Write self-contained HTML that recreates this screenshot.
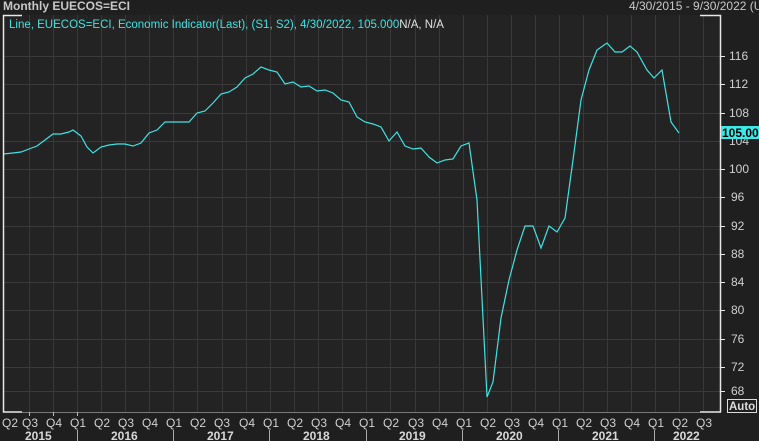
<!DOCTYPE html>
<html><head><meta charset="utf-8"><style>
html,body{margin:0;padding:0;background:#1f1f1f;width:759px;height:441px;overflow:hidden}
svg{display:block}
text{font-family:"Liberation Sans",sans-serif}
</style></head><body>
<svg width="759" height="441" viewBox="0 0 759 441" xmlns="http://www.w3.org/2000/svg">
<rect width="759" height="441" fill="#1f1f1f"/>
<rect x="3" y="15" width="717" height="397" fill="#232323"/>
<g stroke="#3a3a3a" stroke-width="1">
<line x1="3" x2="720" y1="56.5" y2="56.5"/><line x1="3" x2="720" y1="84.5" y2="84.5"/>
<line x1="3" x2="720" y1="113.5" y2="113.5"/><line x1="3" x2="720" y1="141.5" y2="141.5"/>
<line x1="3" x2="720" y1="169.5" y2="169.5"/><line x1="3" x2="720" y1="197.5" y2="197.5"/>
<line x1="3" x2="720" y1="226.5" y2="226.5"/><line x1="3" x2="720" y1="254.5" y2="254.5"/>
<line x1="3" x2="720" y1="282.5" y2="282.5"/><line x1="3" x2="720" y1="310.5" y2="310.5"/>
<line x1="3" x2="720" y1="339.5" y2="339.5"/><line x1="3" x2="720" y1="367.5" y2="367.5"/>
<line x1="3" x2="720" y1="391.5" y2="391.5"/>
</g>
<g stroke="#383838" stroke-width="1">
<line x1="29.5" x2="29.5" y1="15" y2="412"/><line x1="53.5" x2="53.5" y1="15" y2="412"/>
<line x1="77.5" x2="77.5" y1="15" y2="412"/><line x1="101.5" x2="101.5" y1="15" y2="412"/>
<line x1="125.5" x2="125.5" y1="15" y2="412"/><line x1="149.5" x2="149.5" y1="15" y2="412"/>
<line x1="173.5" x2="173.5" y1="15" y2="412"/><line x1="197.5" x2="197.5" y1="15" y2="412"/>
<line x1="222.5" x2="222.5" y1="15" y2="412"/><line x1="246.5" x2="246.5" y1="15" y2="412"/>
<line x1="270.5" x2="270.5" y1="15" y2="412"/><line x1="294.5" x2="294.5" y1="15" y2="412"/>
<line x1="318.5" x2="318.5" y1="15" y2="412"/><line x1="342.5" x2="342.5" y1="15" y2="412"/>
<line x1="366.5" x2="366.5" y1="15" y2="412"/><line x1="390.5" x2="390.5" y1="15" y2="412"/>
<line x1="415.5" x2="415.5" y1="15" y2="412"/><line x1="439.5" x2="439.5" y1="15" y2="412"/>
<line x1="463.5" x2="463.5" y1="15" y2="412"/><line x1="487.5" x2="487.5" y1="15" y2="412"/>
<line x1="511.5" x2="511.5" y1="15" y2="412"/><line x1="535.5" x2="535.5" y1="15" y2="412"/>
<line x1="559.5" x2="559.5" y1="15" y2="412"/><line x1="583.5" x2="583.5" y1="15" y2="412"/>
<line x1="607.5" x2="607.5" y1="15" y2="412"/><line x1="631.5" x2="631.5" y1="15" y2="412"/>
<line x1="655.5" x2="655.5" y1="15" y2="412"/><line x1="679.5" x2="679.5" y1="15" y2="412"/>
<line x1="703.5" x2="703.5" y1="15" y2="412"/>
</g>
<polyline fill="none" stroke="#3fe3e3" stroke-width="1.2" points="3,154 13,153 21,152 29,149 37,146 45,140 53,134 61,134 69,132 73,130 81,136 87,147 93,153 101,147 109,145 117,144 125,144 133,146 141,143 149,133 157,130 165,122 173,122 181,122 189,122 197,113 205,111 213,103 221,94 229,92 237,87 245,78 253,74 261,67 269,70 277,72 285,84 293,82 301,87 309,86 317,91 325,90 333,93 341,100 349,102 357,117 365,122 373,124 381,127 389,141 397,132 405,146 413,149 421,148 429,157 437,163 445,160 453,159 461,146 469,143 477,200 487,397 493,382 501,318 509,280 517,250 525,226 533,226 541,248 549,226 557,232 565,218 573,160 581,100 589,70 597,50 607,43 615,52 622,52 630,46 637,52 647,70 654,78 662,70 671,122 679,133"/>
<g stroke="#e8e8e8" stroke-width="1.5" fill="none">
<polyline points="22,15.5 3.5,15.5 3.5,412 22,412"/>
<polyline points="700,15.5 720.5,15.5 720.5,412 700,412"/>
</g>
<line x1="22" x2="700" y1="412.5" y2="412.5" stroke="#7a7a7a"/>
<g stroke="#e8e8e8" stroke-width="1">
<line x1="720" x2="725" y1="56.5" y2="56.5"/><line x1="720" x2="725" y1="84.5" y2="84.5"/>
<line x1="720" x2="725" y1="113.5" y2="113.5"/><line x1="720" x2="725" y1="169.5" y2="169.5"/>
<line x1="720" x2="725" y1="197.5" y2="197.5"/><line x1="720" x2="725" y1="226.5" y2="226.5"/>
<line x1="720" x2="725" y1="254.5" y2="254.5"/><line x1="720" x2="725" y1="282.5" y2="282.5"/>
<line x1="720" x2="725" y1="310.5" y2="310.5"/><line x1="720" x2="725" y1="339.5" y2="339.5"/>
<line x1="720" x2="725" y1="367.5" y2="367.5"/><line x1="720" x2="725" y1="391.5" y2="391.5"/>
</g>
<g fill="#d0d0d0" font-size="12">
<text x="729" y="60">116</text><text x="729" y="88">112</text><text x="729" y="117">108</text>
<text x="729" y="145">104</text><text x="729" y="173">100</text><text x="731" y="201">96</text>
<text x="731" y="230">92</text><text x="731" y="258">88</text><text x="731" y="286">84</text>
<text x="731" y="314">80</text><text x="731" y="343">76</text><text x="731" y="371">72</text>
<text x="731" y="395">68</text>
</g>
<rect x="721" y="126" width="38" height="13" fill="#3fe8e8"/>
<text x="722" y="137" font-size="12" font-weight="bold" fill="#000">105.00</text>
<rect x="727.5" y="399.5" width="29" height="13" fill="none" stroke="#ddd"/>
<text x="729" y="410" font-size="11.5" font-weight="bold" fill="#ddd">Auto</text>
<text x="3" y="10" font-size="12" font-weight="bold" fill="#c8c8c8">Monthly EUECOS=ECI</text>
<text x="629" y="10" font-size="12" fill="#c8c8c8">4/30/2015 - 9/30/2022 (UT</text>
<text x="9" y="28" font-size="11.5" fill="#3fe3e3">Line, EUECOS=ECI, Economic Indicator(Last), (S1, S2), 4/30/2022, 105.000<tspan fill="#e0e0e0">N/A, N/A</tspan></text>
<g stroke="#bbb"><line x1="29.5" x2="29.5" y1="412" y2="416"/><line x1="53.5" x2="53.5" y1="412" y2="416"/><line x1="77.5" x2="77.5" y1="412" y2="416"/></g>
<g fill="#d0d0d0" font-size="12">
<text x="2" y="427">Q2</text><text x="22" y="427">Q3</text><text x="46" y="427">Q4</text>
<text x="70" y="427">Q1</text><text x="94" y="427">Q2</text><text x="118" y="427">Q3</text><text x="142" y="427">Q4</text>
<text x="166" y="427">Q1</text><text x="190" y="427">Q2</text><text x="214" y="427">Q3</text><text x="239" y="427">Q4</text>
<text x="263" y="427">Q1</text><text x="287" y="427">Q2</text><text x="311" y="427">Q3</text><text x="335" y="427">Q4</text>
<text x="359" y="427">Q1</text><text x="383" y="427">Q2</text><text x="408" y="427">Q3</text><text x="432" y="427">Q4</text>
<text x="456" y="427">Q1</text><text x="480" y="427">Q2</text><text x="504" y="427">Q3</text><text x="528" y="427">Q4</text>
<text x="552" y="427">Q1</text><text x="576" y="427">Q2</text><text x="600" y="427">Q3</text><text x="624" y="427">Q4</text>
<text x="648" y="427">Q1</text><text x="672" y="427">Q2</text><text x="696" y="427">Q3</text>
</g>
<g stroke="#aaa"><line x1="77.5" x2="77.5" y1="430" y2="441"/><line x1="173.5" x2="173.5" y1="430" y2="441"/><line x1="269.5" x2="269.5" y1="430" y2="441"/><line x1="366.5" x2="366.5" y1="430" y2="441"/><line x1="462.5" x2="462.5" y1="430" y2="441"/><line x1="558.5" x2="558.5" y1="430" y2="441"/><line x1="654.5" x2="654.5" y1="430" y2="441"/></g>
<g fill="#d8d8d8" font-size="12" font-weight="bold">
<text x="25" y="440">2015</text><text x="111" y="440">2016</text><text x="207" y="440">2017</text>
<text x="303" y="440">2018</text><text x="399" y="440">2019</text><text x="496" y="440">2020</text>
<text x="592" y="440">2021</text><text x="673" y="440">2022</text>
</g>
</svg>
</body></html>
